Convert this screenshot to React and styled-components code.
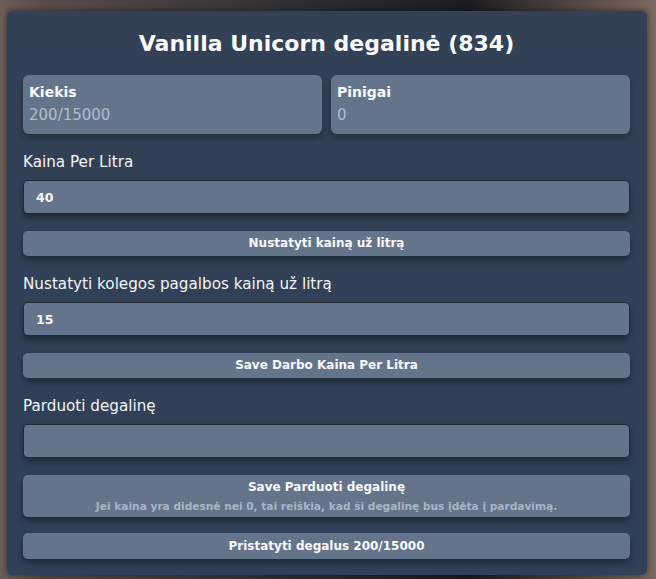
import React from "react";
import styled, { createGlobalStyle } from "styled-components";

const Global = createGlobalStyle`
  html, body { margin: 0; padding: 0; }
  body {
    width: 656px;
    height: 579px;
    overflow: hidden;
    font-family: "DejaVu Sans", "Open Sans", sans-serif;
    background:
      linear-gradient(90deg, #6e5e58 0px, #5a4d4a 40px, #2a2c30 320px, #1c1d20 470px, #6a5a52 620px, #7a6a62 656px);
  }
  #root { width: 656px; height: 579px; }
`;

const Stage = styled.div`
  box-sizing: border-box;
  width: 656px;
  height: 579px;
  padding: 11px 9px 4px 7px;
  display: flex;
`;

const Panel = styled.div`
  box-sizing: border-box;
  flex: 1;
  background: linear-gradient(180deg, #334155 0%, #304057 100%);
  border-radius: 5px;
  padding: 16px 17px 16px 16px;
  display: flex;
  flex-direction: column;
  box-shadow: 0 0 6px rgba(0, 0, 0, 0.5);
`;

const Title = styled.h1`
  margin: 0;
  height: 34px;
  line-height: 34px;
  text-align: center;
  color: #f8fafc;
  font-size: 22px;
  font-weight: 700;
`;

const Stats = styled.div`
  margin-top: 14px;
  display: grid;
  grid-template-columns: 1fr 1fr;
  gap: 9px;
`;

const StatCard = styled.div`
  box-sizing: border-box;
  height: 59px;
  background: #64748b;
  border-radius: 6px;
  padding: 6px 6px;
  display: flex;
  flex-direction: column;
  box-shadow: 0 4px 6px rgba(0, 0, 0, 0.3);
`;

const StatLabel = styled.div`
  color: #f8fafc;
  font-size: 14px;
  font-weight: 700;
  line-height: 22px;
`;

const StatValue = styled.div`
  color: #b3bcc9;
  font-size: 15px;
  font-weight: 400;
  line-height: 24px;
`;

const FieldLabel = styled.div`
  margin-top: ${(p) => p.$top || 16}px;
  height: 24px;
  line-height: 24px;
  color: #f1f5f9;
  font-size: 15.2px;
  font-weight: 400;
`;

const Input = styled.div`
  box-sizing: border-box;
  margin-top: 6px;
  height: 34px;
  background: #64748b;
  border: 1px solid #1f2833;
  border-radius: 5px;
  padding: 0 12px;
  display: flex;
  align-items: center;
  color: #f8fafc;
  font-size: 12.5px;
  font-weight: 700;
  box-shadow: 0 4px 6px rgba(0, 0, 0, 0.35);
`;

const Button = styled.div`
  box-sizing: border-box;
  margin-top: ${(p) => p.$top || 17}px;
  min-height: ${(p) => p.$h || 25}px;
  background: #64748b;
  border-radius: 5px;
  padding: ${(p) => (p.$tall ? "3px 8px 2px" : "0 8px")};
  display: flex;
  flex-direction: column;
  align-items: center;
  justify-content: center;
  color: #f8fafc;
  font-size: 12px;
  font-weight: 700;
  line-height: 19px;
  box-shadow: 0 4px 6px rgba(0, 0, 0, 0.35);
`;

const ButtonNote = styled.div`
  color: #aab4c2;
  font-size: 10.6px;
  font-weight: 700;
  line-height: 18px;
`;

export default function App() {
  return (
    <>
      <Global />
      <Stage>
        <Panel>
          <Title>Vanilla Unicorn degalinė (834)</Title>
          <Stats>
            <StatCard>
              <StatLabel>Kiekis</StatLabel>
              <StatValue>200/15000</StatValue>
            </StatCard>
            <StatCard>
              <StatLabel>Pinigai</StatLabel>
              <StatValue>0</StatValue>
            </StatCard>
          </Stats>

          <FieldLabel $top={16}>Kaina Per Litra</FieldLabel>
          <Input>40</Input>
          <Button>Nustatyti kainą už litrą</Button>

          <FieldLabel>Nustatyti kolegos pagalbos kainą už litrą</FieldLabel>
          <Input>15</Input>
          <Button>Save Darbo Kaina Per Litra</Button>

          <FieldLabel>Parduoti degalinę</FieldLabel>
          <Input />
          <Button $tall $h={42}>
            Save Parduoti degalinę
            <ButtonNote>
              Jei kaina yra didesnė nei 0, tai reiškia, kad ši degalinę bus įdėta į pardavimą.
            </ButtonNote>
          </Button>
          <Button $top={16} $h={26}>Pristatyti degalus 200/15000</Button>
        </Panel>
      </Stage>
    </>
  );
}
